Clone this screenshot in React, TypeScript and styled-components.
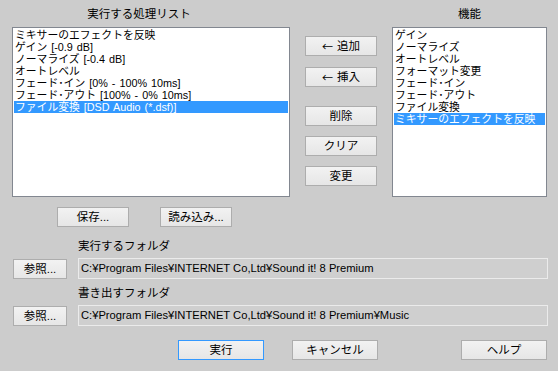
import React from "react";
import styled, { createGlobalStyle } from "styled-components";

const FONT = `"Liberation Sans", "Noto Sans CJK JP", sans-serif`;

const Global = createGlobalStyle`
  html, body { margin: 0; padding: 0; background: #cccccc; }
  body { font-family: ${FONT}; }
`;

const Window = styled.div`
  width: 558px;
  height: 371px;
  background: #cccccc;
  color: #000;
  font-family: ${FONT};
  font-size: 12px;
  display: flex;
  flex-direction: column;
  box-sizing: border-box;
  overflow: hidden;
`;

const Top = styled.div`
  display: grid;
  grid-template-columns: 278px 1fr 155px;
  padding: 0 11px 0 12px;
`;

const Column = styled.div`
  display: flex;
  flex-direction: column;
`;

const Title = styled.div<{ $shift?: number }>`
  height: 27px;
  display: flex;
  align-items: center;
  justify-content: center;
  padding-right: ${(p) => p.$shift ?? 0}px;
  font-size: 11.5px;
  line-height: 14px;
`;

const ListBox = styled.div`
  height: 170px;
  box-sizing: border-box;
  border: 1px solid #828790;
  background: #ffffff;
  padding: 1px 1px 0 1px;
  overflow: hidden;
`;

const Item = styled.div<{ $selected?: boolean }>`
  height: 12px;
  line-height: 12px;
  font-size: 10.8px;
  padding-left: 1px;
  white-space: nowrap;
  word-spacing: 1px;
  background: ${(p) => (p.$selected ? "#3399ff" : "transparent")};
  color: ${(p) => (p.$selected ? "#ffffff" : "#000000")};
`;

const Button = styled.button<{ $w?: number; $default?: boolean; $mt?: number }>`
  width: ${(p) => p.$w ?? 72}px;
  height: 20px;
  margin-top: ${(p) => p.$mt ?? 0}px;
  box-sizing: border-box;
  padding: 0;
  border: 1px solid ${(p) => (p.$default ? "#3399ff" : "#adadad")};
  background: linear-gradient(#f2f2f2, #e6e6e6);
  font-family: ${FONT};
  font-size: 11.5px;
  line-height: 16px;
  color: #000;
  display: flex;
  align-items: center;
  justify-content: center;
  gap: 4px;
  flex: none;
`;

const Arrow = styled.span`
  font-family: "Noto Sans CJK JP", sans-serif;
  font-size: 11px;
  line-height: 14px;
`;

const Middle = styled.div`
  display: flex;
  flex-direction: column;
  align-items: center;
`;

const SaveRow = styled.div`
  display: flex;
  gap: 31px;
  padding-left: 45px;
  margin-top: 10px;
`;

const FolderSection = styled.div`
  display: flex;
  flex-direction: column;
  padding-left: 13px;
`;

const Label = styled.div<{ $mt: number }>`
  height: 14px;
  line-height: 14px;
  margin-top: ${(p) => p.$mt}px;
  padding-left: 65px;
  font-size: 11.5px;
`;

const FolderRow = styled.div`
  display: flex;
  align-items: center;
  gap: 11px;
  margin-top: 5px;
  height: 21px;
`;

const PathField = styled.div`
  width: 470px;
  height: 21px;
  box-sizing: border-box;
  border: 1px solid #ebebeb;
  background: #cfcfcf;
  padding-left: 2px;
  font-size: 11.2px;
  line-height: 19px;
  white-space: nowrap;
  overflow: hidden;
`;

const BottomRow = styled.div`
  display: flex;
  gap: 28px;
  padding: 0 11px 0 178px;
  margin-top: 14px;
`;

const Spacer = styled.div`
  flex: 1;
`;

const processList = [
  "ミキサーのエフェクトを反映",
  "ゲイン [-0.9 dB]",
  "ノーマライズ [-0.4 dB]",
  "オートレベル",
  "フェード･イン [0% - 100% 10ms]",
  "フェード･アウト [100% - 0% 10ms]",
  "ファイル変換 [DSD Audio (*.dsf)]",
];

const functions = [
  "ゲイン",
  "ノーマライズ",
  "オートレベル",
  "フォーマット変更",
  "フェード･イン",
  "フェード･アウト",
  "ファイル変換",
  "ミキサーのエフェクトを反映",
];

export default function App() {
  return (
    <>
      <Global />
      <Window>
        <Top>
          <Column>
            <Title $shift={24}>実行する処理リスト</Title>
            <ListBox>
              {processList.map((t, i) => (
                <Item key={t} $selected={i === processList.length - 1}>
                  {t}
                </Item>
              ))}
            </ListBox>
            <SaveRow>
              <Button>保存...</Button>
              <Button>読み込み...</Button>
            </SaveRow>
          </Column>
          <Middle>
            <Button $mt={36}>
              <Arrow>←</Arrow>追加
            </Button>
            <Button $mt={11}>
              <Arrow>←</Arrow>挿入
            </Button>
            <Button $mt={19}>削除</Button>
            <Button $mt={10}>クリア</Button>
            <Button $mt={10}>変更</Button>
          </Middle>
          <Column>
            <Title>機能</Title>
            <ListBox>
              {functions.map((t, i) => (
                <Item key={t} $selected={i === functions.length - 1}>
                  {t}
                </Item>
              ))}
            </ListBox>
          </Column>
        </Top>
        <FolderSection>
          <Label $mt={12}>実行するフォルダ</Label>
          <FolderRow>
            <Button $w={54}>参照...</Button>
            <PathField>C:¥Program Files¥INTERNET Co,Ltd¥Sound it! 8 Premium</PathField>
          </FolderRow>
          <Label $mt={7}>書き出すフォルダ</Label>
          <FolderRow>
            <Button $w={54}>参照...</Button>
            <PathField>C:¥Program Files¥INTERNET Co,Ltd¥Sound it! 8 Premium¥Music</PathField>
          </FolderRow>
        </FolderSection>
        <BottomRow>
          <Button $w={86} $default>実行</Button>
          <Button $w={86}>キャンセル</Button>
          <Spacer />
          <Button $w={86}>ヘルプ</Button>
        </BottomRow>
      </Window>
    </>
  );
}
